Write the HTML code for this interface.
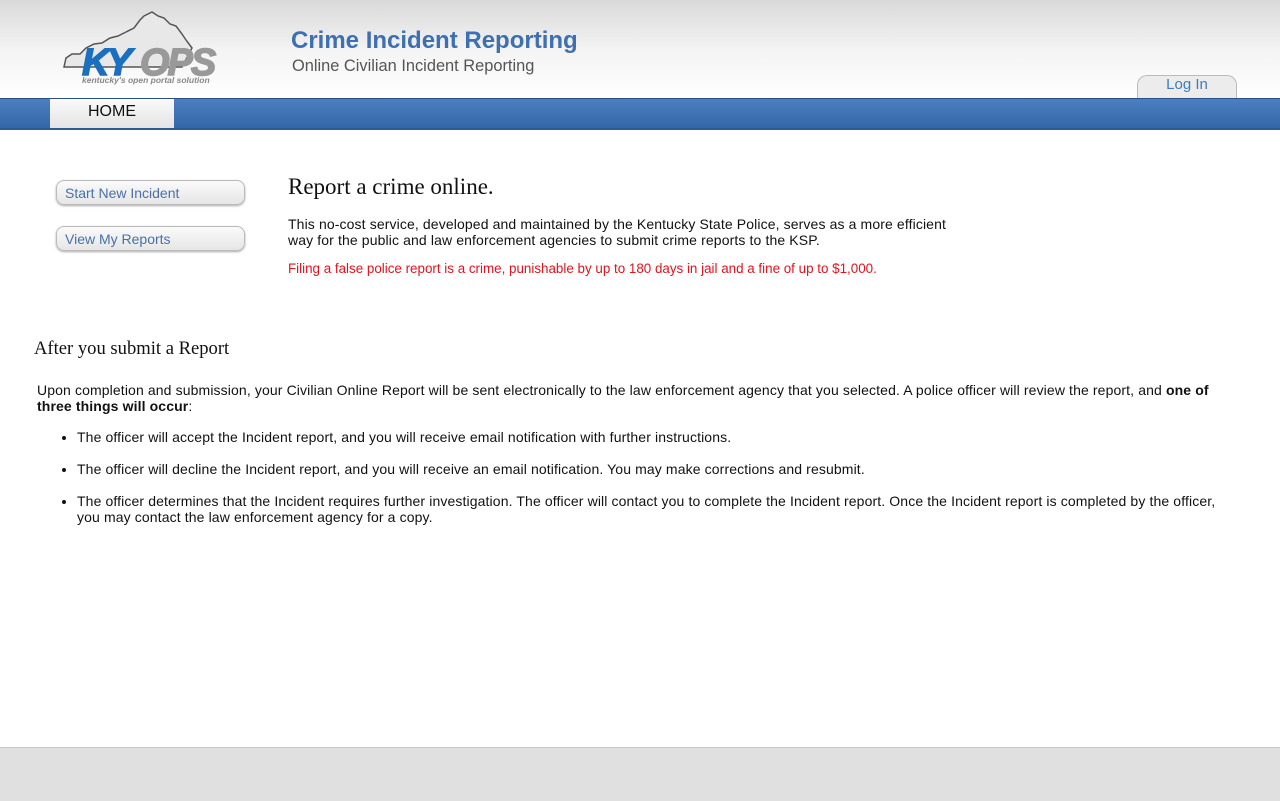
<!DOCTYPE html>
<html><head><meta charset="utf-8"><style>
body{margin:0;width:1280px;height:800px;position:relative;background:#fff;font-family:"Liberation Sans",Arial,sans-serif;overflow:hidden}
.hdr{position:absolute;left:0;top:0;width:1280px;height:98px;background:linear-gradient(#d9d9d9,#f3f3f3 50%,#fff)}
.nav{position:absolute;left:0;top:98px;width:1280px;height:32px;background:linear-gradient(#4a7fc0,#3467a8);border-top:1px solid #2a4f80;border-bottom:2px solid #2f5a90;box-sizing:border-box}
.home{position:absolute;left:50px;top:99px;width:124px;height:29px;background:linear-gradient(#fafafa,#e4e4e4);font-size:16px;text-align:center;line-height:26px;color:#111}
.login{position:absolute;left:1137px;top:75px;width:98px;height:23px;background:#ececec;border:1px solid #bbb;border-bottom:none;border-radius:10px 10px 0 0;color:#3a7ebf;font-size:15px;text-align:center;line-height:18px}
.t1{position:absolute;left:291px;top:27px;font-size:24px;font-weight:bold;color:#3e6fb0}
.t2{position:absolute;left:292px;top:57px;font-size:16.4px;color:#555}
.btn{position:absolute;left:56px;width:189px;height:25px;border:1px solid #bbb;border-radius:8px;background:linear-gradient(#fafafa,#e6e6e6);box-shadow:0 1px 2px #aaa;color:#4a70a8;font-size:14px;line-height:24px;padding-left:8px;box-sizing:border-box}
h1{position:absolute;left:288px;top:174px;margin:0;font:normal 23px "Liberation Serif",serif;color:#111}
.p1{position:absolute;left:288px;top:216px;width:680px;font-size:14px;letter-spacing:0.12px;line-height:16px;color:#111}
.red{position:absolute;left:288px;top:261px;font-size:13.4px;color:#e0141e}
h2{position:absolute;left:34px;top:338px;margin:0;font:normal 18.6px "Liberation Serif",serif;color:#111}
.p2{position:absolute;left:37px;top:382px;width:1205px;font-size:14px;letter-spacing:0.12px;line-height:16px;color:#111}
ul{position:absolute;left:37px;top:429px;width:1150px;margin:0;padding-left:40px;font-size:14px;letter-spacing:0.12px;line-height:16px;color:#111}
li{margin-bottom:16px}
.foot{position:absolute;left:0;top:747px;width:1280px;height:53px;background:#e0e0e0;border-top:1px solid #c8c8c8}
</style></head><body>
<div class="hdr"></div>
<svg style="position:absolute;left:60px;top:8px" width="160" height="80" viewBox="0 0 160 80">
<path d="M4 59 L6 50 L12 46 L20 46 L26 40 L34 36 L42 35 L50 30 L58 28 L66 24 L74 20 L80 12 L84 8 L92 4 L98 8 L104 10 L110 16 L116 18 L122 26 L126 32 L132 40 L122 59 Z" fill="#e8e8e8" stroke="#555" stroke-width="1.5"/>
<text x="22" y="67" style="font-family:'Liberation Sans';font-weight:bold;font-style:italic;font-size:38px;letter-spacing:-3px" fill="#1a6fc0" stroke="#1a6fc0" stroke-width="1.5">KY</text>
<text x="80" y="67" style="font-family:'Liberation Sans';font-weight:bold;font-style:italic;font-size:38px;letter-spacing:-2px" fill="#999" stroke="#999" stroke-width="1.5">OPS</text>
<text x="22" y="75" style="font-family:'Liberation Sans';font-weight:bold;font-style:italic;font-size:8.5px" fill="#888">kentucky's open portal solution</text>
</svg>
<div class="t1">Crime Incident Reporting</div>
<div class="t2">Online Civilian Incident Reporting</div>
<div class="login">Log In</div>
<div class="nav"></div>
<div class="home">HOME</div>
<div class="btn" style="top:180px">Start New Incident</div>
<div class="btn" style="top:226px">View My Reports</div>
<h1>Report a crime online.</h1>
<div class="p1">This no-cost service, developed and maintained by the Kentucky State Police, serves as a more efficient way for the public and law enforcement agencies to submit crime reports to the KSP.</div>
<div class="red">Filing a false police report is a crime, punishable by up to 180 days in jail and a fine of up to $1,000.</div>
<h2>After you submit a Report</h2>
<div class="p2">Upon completion and submission, your Civilian Online Report will be sent electronically to the law enforcement agency that you selected. A police officer will review the report, and <b>one of three things will occur</b>:</div>
<ul>
<li>The officer will accept the Incident report, and you will receive email notification with further instructions.</li>
<li>The officer will decline the Incident report, and you will receive an email notification. You may make corrections and resubmit.</li>
<li>The officer determines that the Incident requires further investigation. The officer will contact you to complete the Incident report. Once the Incident report is completed by the officer, you may contact the law enforcement agency for a copy.</li>
</ul>
<div class="foot"></div>
</body></html>
